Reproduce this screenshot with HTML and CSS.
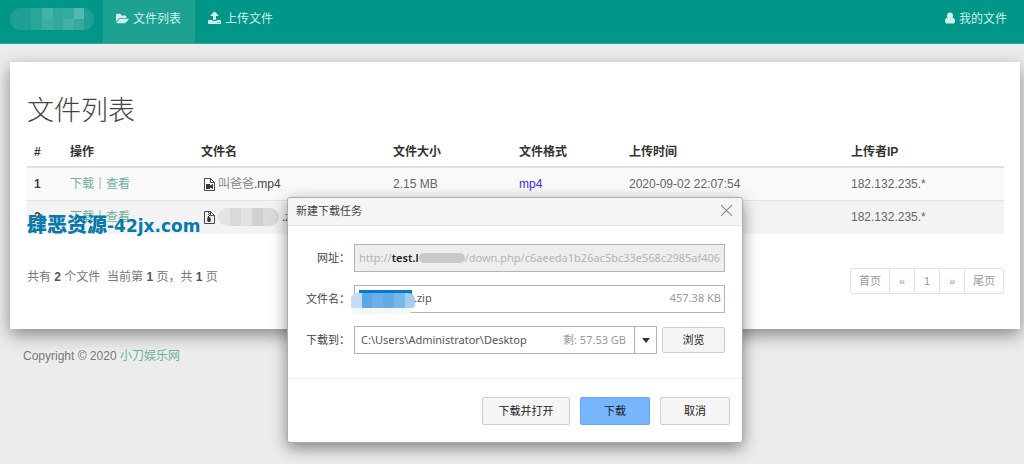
FILE: index.html
```html
<!DOCTYPE html>
<html lang="zh-CN">
<head>
<meta charset="utf-8">
<title>文件列表</title>
<link rel="stylesheet" href="styles.css">
</head>
<body>
<header class="navbar">
  <div class="brand" role="img" aria-label="站点名称">
    <svg class="mosaic" viewBox="0 0 84 22" preserveAspectRatio="none" aria-hidden="true">
      <clipPath id="brandClip"><rect width="84" height="22" rx="10"/></clipPath>
      <g clip-path="url(#brandClip)">
        <rect width="84" height="22" fill="#1fa092"/>
        <rect x="21" width="11" height="22" fill="#29a698"/>
        <rect x="32" width="11" height="11" fill="#45b2a7"/>
        <rect x="32" y="11" width="11" height="11" fill="#3bada1"/>
        <rect x="43" width="10" height="22" fill="#2fa99c"/>
        <rect x="53" width="11" height="11" fill="#35ab9f"/>
        <rect x="53" y="11" width="11" height="11" fill="#42b1a5"/>
        <rect x="64" width="10" height="11" fill="#55b9af"/>
        <rect x="64" y="11" width="10" height="11" fill="#34aa9e"/>
      </g>
    </svg>
  </div>
  <nav class="nav-links">
    <a class="nav-link active" href="#">
      <svg class="icon" viewBox="0 0 1920 1536" aria-hidden="true"><path d="M1879 952q0 31-31 66l-336 396q-43 51-120.500 86.500T1248 1536H160q-34 0-60.500-13T73 1480q0-31 31-66l336-396q43-51 120.500-86.500T704 896h1088q34 0 60.500 13t26.500 43zM1536 608v160H704q-94 0-197 47.500T343 935L6 1331l-5 6q0-4-.5-12.500T0 1312V352q0-92 66-158t158-66h320q92 0 158 66t66 158v32h544q92 0 158 66t66 158z"/></svg>
      <span>文件列表</span>
    </a>
    <a class="nav-link" href="#">
      <svg class="icon" viewBox="0 0 1664 1536" aria-hidden="true"><path d="M1280 1344a64 64 0 1 0-128 0 64 64 0 0 0 128 0zm256 0a64 64 0 1 0-128 0 64 64 0 0 0 128 0zm128-224v320a96 96 0 0 1-96 96H96a96 96 0 0 1-96-96v-320a96 96 0 0 1 96-96h427a193 193 0 0 0 181 128h256a193 193 0 0 0 181-128h427a96 96 0 0 1 96 96zM1339 472q-17 40-59 40h-256v448a64 64 0 0 1-64 64H704a64 64 0 0 1-64-64V512H384q-42 0-59-40-17-39 14-69L787-45q18-19 45-19t45 19l448 448q31 30 14 69z"/></svg>
      <span>上传文件</span>
    </a>
  </nav>
  <a class="nav-link nav-user" href="#">
    <svg class="icon icon-user" viewBox="0 0 1280 1408" aria-hidden="true"><path d="M1280 1137q0 120-73 195t-176 76H249q-103 0-176-76T0 1137q0-145 40-277 65-216 280-220 130 128 320 128t320-128q215 4 280 220 40 132 40 277zM1024 384a384 384 0 1 1-768 0 384 384 0 0 1 768 0z"/></svg>
    <span>我的文件</span>
  </a>
</header>

<main class="panel">
  <h1 class="title">文件列表</h1>
  <table class="files">
    <colgroup><col class="c-num"><col class="c-act"><col class="c-name"><col class="c-size"><col class="c-type"><col class="c-time"><col class="c-ip"></colgroup>
    <thead>
      <tr><th>#</th><th>操作</th><th>文件名</th><th>文件大小</th><th>文件格式</th><th>上传时间</th><th>上传者IP</th></tr>
    </thead>
    <tbody>
      <tr>
        <th scope="row">1</th>
        <td><a href="#">下载</a>｜<a href="#">查看</a></td>
        <td><span class="file"><svg class="file-icon" viewBox="0 0 11 13" aria-hidden="true"><path d="M.5.5h6l4 4v8H.5zM6.500.5v4h4" fill="none" stroke="#4f4252"/><path d="M2 6h4v1.500L9 6v5L6 9.500V11H2z" fill="#3b343e"/></svg><span class="file-name">叫爸爸<b class="ext">.mp4</b></span></span></td>
        <td>2.15 MB</td><td class="type">mp4</td><td>2020-09-02 22:07:54</td><td>182.132.235.*</td>
      </tr>
      <tr>
        <th scope="row">2</th>
        <td><a href="#">下载</a>｜<a href="#">查看</a></td>
        <td><span class="file"><svg class="file-icon" viewBox="0 0 11 13" aria-hidden="true"><path d="M.5.5h6l4 4v8H.5zM6.500.5v4h4" fill="none" stroke="#4f4252"/><path d="M4 1h1v1H4zM5 2h1v1H5zM4 3h1v1H4zM5 4h1v1H5zM4 5h1v1h1l1 3-1 2H4L3 9z" fill="#3b343e"/></svg><span class="blurred"></span><b class="ext">.zip</b></span></td>
        <td></td><td></td><td></td><td>182.132.235.*</td>
      </tr>
    </tbody>
  </table>
  <div class="panel-foot">
    <p class="summary">共有 <b>2</b> 个文件&nbsp; 当前第 <b>1</b> 页，共 <b>1</b> 页</p>
    <nav class="pager" aria-label="分页"><a href="#">首页</a><a href="#">«</a><a href="#">1</a><a href="#">»</a><a href="#">尾页</a></nav>
  </div>
  <div class="watermark"><span class="watermark-cn">肆恶资源</span>-42jx.com</div>
</main>
<footer class="copyright">Copyright © 2020 <a href="#">小刀娱乐网</a></footer>

<section class="dialog" role="dialog" aria-labelledby="dlgTitle">
  <div class="dialog-head">
    <h2 id="dlgTitle">新建下载任务</h2>
    <button class="close" type="button" aria-label="关闭"><svg viewBox="0 0 12 12" aria-hidden="true"><path d="M1 1l10 10M11 1L1 11"/></svg></button>
  </div>
  <form class="dialog-body">
    <div class="row">
      <span class="label">网址：</span>
      <div class="field field-url"><span>http://</span><strong>test.l</strong><i class="smudge"></i><span class="url-rest">/down.php/c6aeeda1b26ac5bc33e568c2985af406.zip</span></div>
    </div>
    <div class="row">
      <label class="label" for="fname">文件名：</label>
      <div class="field field-name">
        <input id="fname" type="text" value=".zip">
        <span class="hint">457.38 KB</span>
        <svg class="selection" viewBox="0 0 65 24" aria-hidden="true">
          <rect x="0" y="3" width="63" height="21" rx="8" fill="#f5f6f7"/>
          <path d="M8 0h53v4H8z" fill="#0877d3"/>
          <path d="M8 3h49q7 0 7 8v3q0 4-4 4H0v-7q0-8 8-8z" fill="#a3cdef"/>
          <path d="M0 18v-7q0-8 8-8h3v15z" fill="#c3dcf1"/>
          <path d="M11 3h10v15H11z" fill="#5aa7e5"/><path d="M21 3h11v15H21z" fill="#6db0e7"/><path d="M32 3h11v15H32z" fill="#60aae6"/><path d="M43 3h11v15H43z" fill="#76b6e9"/>
        </svg>
      </div>
    </div>
    <div class="row">
      <label class="label" for="path">下载到：</label>
      <div class="field field-path">
        <input id="path" type="text" value="C:\Users\Administrator\Desktop">
        <span class="hint">剩: 57.53 GB</span>
        <button class="drop" type="button" aria-label="选择目录"><svg viewBox="0 0 8 5" aria-hidden="true"><path d="M0 0h8L4 5z"/></svg></button>
      </div>
      <button class="btn browse" type="button">浏览</button>
    </div>
  </form>
  <div class="dialog-foot">
    <button class="btn btn-wide" type="button">下载并打开</button>
    <button class="btn btn-primary" type="button">下载</button>
    <button class="btn" type="button">取消</button>
  </div>
</section>
</body>
</html>
```
FILE: styles.css
```css
* { box-sizing: border-box; }
body {
  margin: 0;
  background: #ececec;
  color: #666;
  font: 12px/18px "Liberation Sans", "Noto Sans CJK SC", sans-serif;
}
a { color: #6bb0a0; text-decoration: none; }
button, input { font: inherit; }

.navbar {
  display: flex;
  height: 44px;
  padding: 0 1px 0 10px;
  background: #009688;
  border-bottom: 1px solid #33a397;
}
.brand { width: 84px; margin: 8px 9px 0 0; }
.mosaic { display: block; width: 100%; height: 22px; }
.nav-links { display: flex; flex: 1; }
.nav-link {
  display: flex;
  gap: 4px;
  padding: 10px 14px 0 13px;
  color: #d3eeea;
}
.nav-link.active { background: #1da292; }
.icon { width: 13px; height: 12px; margin-top: 2px; fill: currentColor; overflow: visible; }
.icon-user { width: 10px; }
.nav-user { padding-right: 16px; }

.panel {
  position: relative;
  margin: 18px 4px 0 10px;
  padding: 28px 16px 34px 17px;
  background: #fff;
  box-shadow: 0 6px 16px rgba(0, 0, 0, .42);
}
.title {
  margin: 0;
  font-size: 27px;
  font-weight: 300;
  line-height: 42px;
  color: #444;
}
.files { width: 100%; border-collapse: collapse; table-layout: fixed; }
.files th, .files td { padding: 7px; text-align: left; white-space: nowrap; height: 33px; }
.files th { color: #444; }
.files thead th { height: 35px; padding: 10px 7px 5px; border-bottom: 2px solid #e1e1e1; color: #333; }
.files tbody tr { background: #f9f9f9; }
.files tbody tr + tr { background: #f3f3f3; border-top: 1px solid #e3e3e3; }
.c-num { width: 36px; }
.c-act { width: 131px; }
.c-name { width: 192px; }
.c-size { width: 126px; }
.c-type { width: 110px; }
.c-time { width: 222px; }
.files .type { color: #3a2bf0; }
.file { display: flex; align-items: center; gap: 3px; padding-left: 3px; }
.file-icon { width: 11px; height: 13px; }
.file-name { color: #888; }
.ext { font-weight: 400; color: #444; }
.blurred {
  width: 61px;
  height: 18px;
  border-radius: 9px;
  background: linear-gradient(90deg, #e4e4e4 20%, #d9d9d9 20% 38%, #e2e2e2 38% 56%, #d0d0d0 56% 74%, #dadada 74%);
}
.panel-foot {
  display: flex;
  justify-content: space-between;
  align-items: center;
  padding-top: 34px;
}
.summary { margin: 0 0 9px; color: #777; }
.summary b { color: #555; }
.pager { display: flex; margin-bottom: 1px; border: 1px solid #e2e2e2; border-radius: 3px; }
.pager a { min-width: 24px; padding: 4px 8px; color: #999; font-size: 11px; line-height: 16px; text-align: center; }
.pager a + a { min-width: 25px; border-left: 1px solid #e2e2e2; }
.watermark {
  position: absolute;
  left: 17px;
  top: 151px;
  color: #0879ab;
  font: bold 17px/24px "DejaVu Sans", "Noto Sans CJK SC", sans-serif;
  white-space: nowrap;
}
.watermark-cn { font-size: 20px; font-weight: 900; }
.copyright { padding: 18px 23px; color: #777; }

.dialog {
  position: absolute;
  left: 287px;
  top: 197px;
  width: 456px;
  background: #fff;
  border: 1px solid #a9adb0;
  border-radius: 3px;
  box-shadow: 0 5px 16px rgba(0, 0, 0, .45);
  color: #444;
  font: 11px/16px "Noto Sans", "Noto Sans CJK SC", sans-serif;
}
.dialog-head {
  display: flex;
  justify-content: space-between;
  align-items: center;
  height: 28px;
  padding: 0 9px 2px 8px;
  background: #f5f5f5;
  border-bottom: 1px solid #e6e6e6;
  border-radius: 3px 3px 0 0;
}
.dialog-head h2 { margin: 0; font-size: 11px; font-weight: 400; }
.close { padding: 0; border: 0; background: none; }
.close svg { display: block; width: 13px; height: 13px; fill: none; stroke: #888; }
.dialog-body {
  display: grid;
  grid-template-columns: minmax(0, 1fr);
  gap: 13px;
  padding: 18px 17px 24px 0;
  border-bottom: 1px solid #eee;
}
.row { display: flex; align-items: center; }
.label { width: 66px; text-align: right; padding-right: 4px; flex: none; }
.field {
  position: relative;
  display: flex;
  align-items: center;
  flex: 1;
  min-width: 0;
  height: 28px;
  padding-bottom: 2px;
  border: 1px solid #b4b4b4;
  background: #fff;
}
.field input {
  flex: 1;
  min-width: 0;
  padding: 0;
  border: 0;
  outline: 0;
  background: none;
  color: #555;
}
.field-url { background: #eee; padding: 0 3px 0 4px; color: #b3b3b3; white-space: nowrap; }
.field-url strong { color: #222; font-weight: 600; }
.url-rest { min-width: 0; overflow: hidden; }
.smudge { flex: none; width: 46px; height: 10px; border-radius: 5px; background: #c9c9c9; }
.field-name { padding-left: 59px; padding-right: 3px; }
.hint { color: #999; white-space: nowrap; }
.selection { position: absolute; left: -4px; top: 4px; width: 65px; height: 24px; }
.field-path { padding: 0 0 0 6px; }
.drop {
  display: flex;
  align-items: center;
  justify-content: center;
  width: 22px;
  height: 26px;
  margin-left: 8px;
  padding: 0;
  border: 0;
  border-left: 1px solid #b4b4b4;
  background: none;
}
.drop svg { width: 8px; height: 5px; fill: #333; }
.btn {
  width: 70px;
  height: 28px;
  padding: 0;
  border: 1px solid #cdcdcd;
  border-radius: 2px;
  background: #f5f5f5;
  color: #222;
}
.browse { width: 63px; height: 26px; margin-left: 5px; }
.dialog-foot { display: flex; justify-content: flex-end; gap: 10px; padding: 18px 12px 17px; }
.btn-wide { width: 88px; }
.btn-primary { background: #78b5ff; border-color: #62a5f5; }
```
